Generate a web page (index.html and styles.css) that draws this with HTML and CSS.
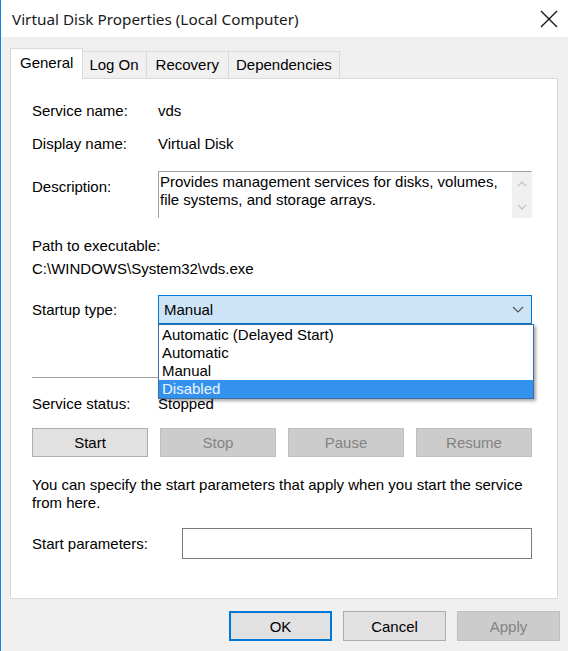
FILE: index.html
```html
<!DOCTYPE html>
<html lang="en">
<head>
  <meta charset="UTF-8" />
  <title>Virtual Disk Properties (Local Computer)</title>
  <link rel="stylesheet" href="styles.css">
</head>
<body>
  <div class="window">
    <!-- Title bar -->
    <div class="titlebar">
      <span class="title">Virtual Disk Properties (Local Computer)</span>
      <span class="close">
        <svg width="18" height="18" viewBox="0 0 18 18">
          <path d="M1 1 L17 17 M17 1 L1 17" stroke="#111" stroke-width="1.3" fill="none" />
        </svg>
      </span>
    </div>

    <div class="dialog">
      <!-- Tabs -->
      <div class="tabs">
        <div class="tab active">General</div>
        <div class="tab">Log On</div>
        <div class="tab recovery">Recovery</div>
        <div class="tab">Dependencies</div>
      </div>

      <!-- General page -->
      <div class="panel">
        <div class="row">
          <span class="label">Service name:</span>
          <span>vds</span>
        </div>
        <div class="row">
          <span class="label">Display name:</span>
          <span>Virtual Disk</span>
        </div>
        <div class="row desc-row">
          <span class="label">Description:</span>
          <div class="desc-box">
            <p>Provides management services for disks, volumes, file systems, and storage arrays.</p>
            <div class="scroll">
              <svg width="10" height="6" viewBox="0 0 10 6"><path d="M1 5 L5 1 L9 5" stroke="#c4c4c4" stroke-width="1.3" fill="none" /></svg>
              <svg width="10" height="6" viewBox="0 0 10 6"><path d="M1 1 L5 5 L9 1" stroke="#c4c4c4" stroke-width="1.3" fill="none" /></svg>
            </div>
          </div>
        </div>
        <div class="path">
          <div>Path to executable:</div>
          <div>C:\WINDOWS\System32\vds.exe</div>
        </div>
        <div class="row startup-row">
          <span class="label">Startup type:</span>
          <div class="combo">
            <div class="combo-value">
              <span>Manual</span>
              <svg width="12" height="7" viewBox="0 0 12 7"><path d="M1 1 L6 6 L11 1" stroke="#555" stroke-width="1.2" fill="none" /></svg>
            </div>
            <ul class="combo-list">
              <li>Automatic (Delayed Start)</li>
              <li>Automatic</li>
              <li>Manual</li>
              <li class="selected">Disabled</li>
            </ul>
          </div>
        </div>
        <hr class="separator">
        <div class="row status-row">
          <span class="label">Service status:</span>
          <span>Stopped</span>
        </div>
        <div class="service-buttons">
          <button class="btn">Start</button>
          <button class="btn" disabled>Stop</button>
          <button class="btn" disabled>Pause</button>
          <button class="btn" disabled>Resume</button>
        </div>
        <p class="hint">You can specify the start parameters that apply when you start the service from here.</p>
        <div class="row params-row">
          <span class="label">Start parameters:</span>
          <div class="text-input"></div>
        </div>
      </div>

      <!-- Dialog buttons -->
      <div class="actions">
        <button class="btn default">OK</button>
        <button class="btn">Cancel</button>
        <button class="btn" disabled>Apply</button>
      </div>
    </div>
  </div>
</body>
</html>
```

FILE: styles.css
```css
/* Window frame */
body {
  margin: 0;
  font-family: 'Liberation Sans', Arial, sans-serif;
  font-size: 15px;
  color: #000000;
  background: #f0f0f0;
}

.window {
  width: 567px;
  height: 651px;
  border-left: 1px solid #1b7fd6; /* active window edge */
  background: #f0f0f0;
  display: flex;
  flex-direction: column;
  overflow: hidden;
}

.titlebar {
  height: 37px;
  flex-shrink: 0;
  background: #ffffff;
  display: flex;
  align-items: center;
  justify-content: space-between;
  padding: 0 10px 0 11px;
}

.title {
  font-family: 'Noto Sans', sans-serif;
  font-size: 15.3px;
  color: #1a1a1a;
  padding-top: 1px;
}

.close {
  display: flex;
}

/* Dialog body */
.dialog {
  padding: 10px 9px 0 9px;
}

.tabs {
  display: flex;
  align-items: flex-end;
  height: 31px;
  padding-left: 3px;
  position: relative;
  z-index: 1;
}

.tab {
  height: 26px;
  line-height: 26px;
  padding: 0 7px;
  background: #f0f0f0;
  border: 1px solid #d9d9d9;
  border-bottom: none;
  margin-left: -1px;
}

.tab.recovery {
  padding: 0 9px;
}

.tab.active {
  height: 30px;
  line-height: 28px;
  background: #ffffff;
  margin: 0 -1px -1px -3px;
  padding: 0 9px;
  position: relative;
  z-index: 2;
}

.panel {
  background: #ffffff;
  border: 1px solid #d9d9d9;
  height: 521px;
  box-sizing: border-box;
  padding: 20px 25px 0 21px;
  margin-right: 1px;
}

.row {
  display: flex;
  align-items: center;
  height: 22px;
  margin-bottom: 11px;
}

.label {
  width: 126px;
  flex-shrink: 0;
}

/* Description */
.desc-row {
  align-items: flex-start;
  height: 47px;
  margin-top: 17px;
  margin-bottom: 0;
}

.desc-row .label {
  padding-top: 7px;
}

.desc-box {
  flex: 1;
  height: 47px;
  box-sizing: border-box;
  border-top: 1px solid #a0a0a0;
  border-left: 1px solid #a0a0a0;
  border-right: 1px solid #f0f0f0;
  display: flex;
}

.desc-box p {
  flex: 1;
  margin: 0;
  padding: 1px 6px 0 1px;
  line-height: 18px;
}

.scroll {
  width: 19px;
  background: #f0f0f0;
  display: flex;
  flex-direction: column;
  align-items: center;
  justify-content: space-between;
  padding: 9px 0 8px;
  box-sizing: border-box;
}

/* Executable path */
.path {
  margin-top: 16px;
  line-height: 23px;
}

/* Startup combo */
.startup-row {
  height: 29px;
  margin-top: 15px;
  margin-bottom: 0;
}

.combo {
  flex: 1;
  position: relative;
}

.combo-value {
  height: 29px;
  box-sizing: border-box;
  background: #cce4f7;
  border: 1px solid #0078d7;
  display: flex;
  align-items: center;
  justify-content: space-between;
  padding: 0 7px 0 5px;
}

.combo-list {
  position: absolute;
  top: 29px;
  left: 0;
  width: 376px;
  box-sizing: border-box;
  margin: 0;
  padding: 1px 0 0;
  list-style: none;
  background: #ffffff;
  border: 1px solid #3a6ea5;
  box-shadow: 2px 2px 3px rgba(0, 0, 0, 0.35);
  z-index: 5;
}

.combo-list li {
  height: 18px;
  line-height: 18px;
  padding-left: 3px;
}

.combo-list li.selected {
  background: #3392ee;
  color: #eef6ff;
}

.separator {
  border: none;
  border-top: 1px solid #a0a0a0;
  margin: 53px 0 0;
}

.status-row {
  height: 18px;
  margin-top: 16px;
  margin-bottom: 0;
}

/* Buttons */
.btn {
  font-family: 'Liberation Sans', Arial, sans-serif;
  font-size: 15px;
  color: #000000;
  background: #e1e1e1;
  border: 1px solid #adadad;
  height: 29px;
  padding: 0;
}

.btn:disabled {
  background: #cccccc;
  border-color: #bfbfbf;
  color: #838383;
}

.service-buttons {
  display: grid;
  grid-template-columns: repeat(4, 1fr);
  gap: 12px;
  margin-top: 16px;
}

.hint {
  margin: 19px 0 0;
  line-height: 18px;
}

.params-row {
  height: 31px;
  margin-top: 16px;
}

.params-row .label {
  width: 150px;
}

.text-input {
  flex: 1;
  height: 31px;
  box-sizing: border-box;
  border: 1px solid #7a7a7a;
  background: #ffffff;
}

/* Dialog buttons */
.actions {
  display: flex;
  justify-content: flex-end;
  gap: 11px;
  margin-top: 12px;
  margin-right: -1px;
}

.actions .btn {
  width: 103px;
  height: 30px;
}

.actions .btn.default {
  border: 2px solid #0078d7;
}
```
